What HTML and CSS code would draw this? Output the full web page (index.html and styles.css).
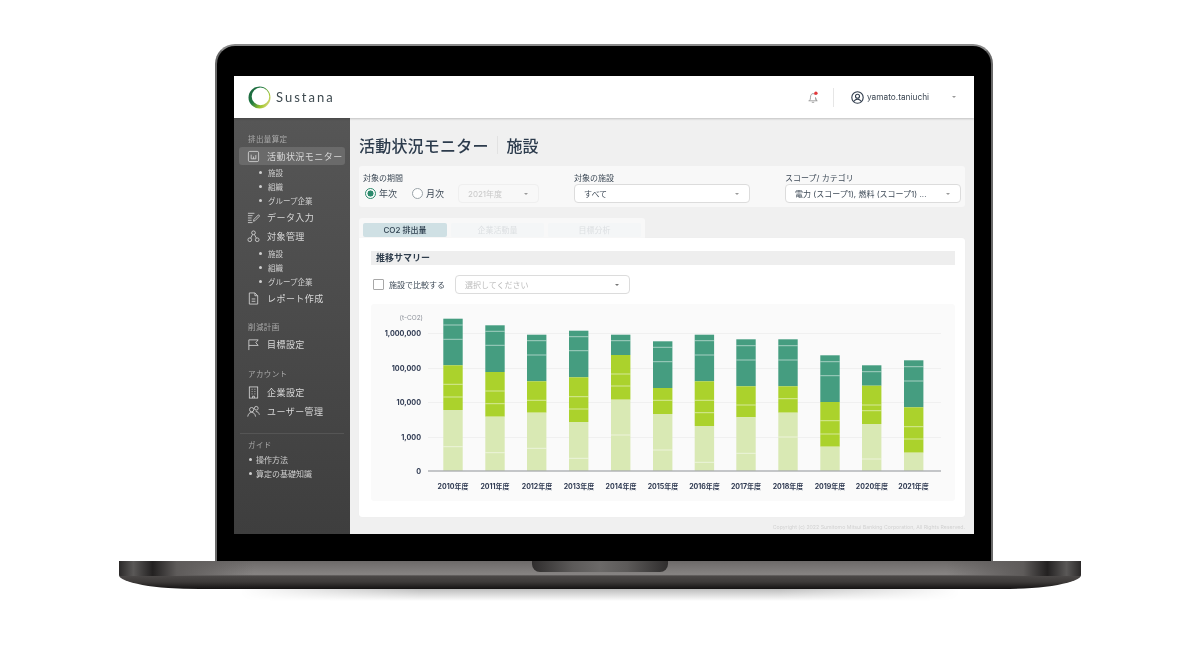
FILE: index.html
```html
<!DOCTYPE html>
<html lang="ja">
<head>
    <meta charset="UTF-8">
    <title>Sustana</title>
    <link rel="stylesheet" href="styles.css">
</head>
<body>
<div class="laptop">
    <div class="lid">
        <div class="screen">
            <header class="topbar">
                <div class="logo">
                    <svg width="23" height="23" viewBox="0 0 23 23">
                        <defs>
                            <linearGradient id="ring" x1="0" y1="0" x2="1" y2="0.7">
                                <stop offset="0" stop-color="#1c5f3e"/>
                                <stop offset="0.45" stop-color="#1f7a42"/>
                                <stop offset="0.8" stop-color="#9fc62c"/>
                                <stop offset="1" stop-color="#d7d67a"/>
                            </linearGradient>
                        </defs>
                        <path fill="url(#ring)" fill-rule="evenodd" d="M11.5 0.5a11 11 0 1 0 0 22a11 11 0 1 0 0-22zM12.5 1.6a8.8 8.8 0 1 1 0 17.6a8.8 8.8 0 1 1 0-17.6z"/>
                    </svg>
                    <span class="logo-name">Sustana</span>
                </div>
                <div class="topbar-right">
                    <span class="bell">
                        <svg width="12" height="13" viewBox="0 0 12 13" fill="none" stroke="#9a9a9a" stroke-width="0.9">
                            <path d="M2.5 9.8c.8-1 1-2 1-3.6C3.500 4 4.600 2.600 6 2.600c.7 0 1.300.3 1.800.8M8.500 6.500c0 1.500.3 2.400 1 3.300zM1.500 9.800h9M4.800 11.300h2.400"/>
                            <circle cx="8.900" cy="2.300" r="1.700" fill="#e3393c" stroke="none"/>
                        </svg>
                    </span>
                    <span class="user">
                        <svg width="13" height="13" viewBox="0 0 13 13" fill="none" stroke="#2e3a4a" stroke-width="1.100">
                            <circle cx="6.500" cy="6.500" r="5.700"/>
                            <circle cx="6.500" cy="5.200" r="2"/>
                            <path d="M3 10.300c.8-1.400 2-2 3.500-2s2.700.6 3.500 2"/>
                        </svg>
                        yamato.taniuchi
                    </span>
                    <span class="caret caret-user"></span>
                </div>
            </header>
            <div class="body">
                <nav class="sidebar">
                    <div class="side-label first">排出量算定</div>
                    <a class="side-item active">
                        <svg class="ico" viewBox="0 0 14 14"><rect x="1.500" y="1.500" width="11" height="11" rx="1.500"/><path d="M4.500 5v4.500h5M7 7v2.500M9.500 5.500v4"/></svg>
                        活動状況モニター
                    </a>
                    <ul class="side-sub">
                        <li>施設</li>
                        <li>組織</li>
                        <li>グループ企業</li>
                    </ul>
                    <a class="side-item">
                        <svg class="ico" viewBox="0 0 14 14"><path d="M1 2.500h7M1 5h5M1 7.500h4M1 10h4M1 12.500h5M7 11l.5-2 5-5 1 1.500-5 5z"/></svg>
                        データ入力
                    </a>
                    <a class="side-item">
                        <svg class="ico" viewBox="0 0 14 14"><circle cx="7" cy="3" r="2"/><circle cx="3" cy="10.500" r="2"/><circle cx="11" cy="10.500" r="2"/><path d="M6 4.800l-2 3.900M8 4.800l2 3.900"/></svg>
                        対象管理
                    </a>
                    <ul class="side-sub">
                        <li>施設</li>
                        <li>組織</li>
                        <li>グループ企業</li>
                    </ul>
                    <a class="side-item">
                        <svg class="ico" viewBox="0 0 14 14"><path d="M2.500 1h6l3 3v9h-9zM8.500 1v3h3M5 7.500h4M5 10h4"/></svg>
                        レポート作成
                    </a>
                    <div class="side-label gap">削減計画</div>
                    <a class="side-item">
                        <svg class="ico" viewBox="0 0 14 14"><path d="M2 13V2h10l-2.500 3L12 8H2"/></svg>
                        目標設定
                    </a>
                    <div class="side-label gap account">アカウント</div>
                    <a class="side-item">
                        <svg class="ico" viewBox="0 0 14 14"><rect x="2.500" y="1" width="9" height="12"/><path d="M5 3.500h1M8 3.500h1M5 6h1M8 6h1M5 8.500h1M8 8.500h1M6 13v-2h2v2"/></svg>
                        企業設定
                    </a>
                    <a class="side-item">
                        <svg class="ico" viewBox="0 0 14 14"><circle cx="5" cy="5" r="2.300"/><circle cx="10" cy="3.500" r="2"/><path d="M.8 12.500c.4-3 2-4.500 4.200-4.500s3.800 1.500 4.200 4.500M9.500 7c2 0 3.300 1.200 3.800 3.500"/></svg>
                        ユーザー管理
                    </a>
                    <div class="side-divider"></div>
                    <div class="side-label guide">ガイド</div>
                    <ul class="side-sub guide-list">
                        <li>操作方法</li>
                        <li>算定の基礎知識</li>
                    </ul>
                </nav>
                <main class="main">
                    <h1 class="title"><span class="title-main">活動状況モニター</span><span>施設</span></h1>
                    <section class="filters">
                        <div class="filter">
                            <label class="filter-label">対象の期間</label>
                            <div class="period">
                                <span class="radio on"></span><span class="radio-text">年次</span>
                                <span class="radio"></span><span class="radio-text second">月次</span>
                                <span class="select disabled year">2021年度<i class="caret"></i></span>
                            </div>
                        </div>
                        <div class="filter">
                            <label class="filter-label">対象の施設</label>
                            <span class="select">すべて<i class="caret"></i></span>
                        </div>
                        <div class="filter">
                            <label class="filter-label">スコープ/ カテゴリ</label>
                            <span class="select">電力 (スコープ1), 燃料 (スコープ1) ...<i class="caret"></i></span>
                        </div>
                    </section>
                    <div class="tabs">
                        <span class="tab current">CO2 排出量</span>
                        <span class="tab">企業活動量</span>
                        <span class="tab">目標分析</span>
                    </div>
                    <section class="card">
                        <h2 class="section-head">推移サマリー</h2>
                        <div class="compare">
                            <span class="checkbox"></span>
                            <span class="compare-label">施設で比較する</span>
                            <span class="select compare-select">選択してください<i class="caret"></i></span>
                        </div>
                        <div class="chart">
                            <svg width="584" height="197" viewBox="371 304 584 197">
                                <g class="grid">
                                    <line x1="428" x2="941" y1="333.500" y2="333.500"/>
                                    <line x1="428" x2="941" y1="368.500" y2="368.500"/>
                                    <line x1="428" x2="941" y1="402.500" y2="402.500"/>
                                    <line x1="428" x2="941" y1="437.500" y2="437.500"/>
                                </g>
                                <g class="y-labels">
                                    <text class="unit" x="423" y="320">(t-CO2)</text>
                                    <text x="421" y="336">1,000,000</text>
                                    <text x="421" y="371">100,000</text>
                                    <text x="421" y="405">10,000</text>
                                    <text x="421" y="440">1,000</text>
                                    <text x="421" y="474">0</text>
                                </g>
                                <g class="bar-dark">
                                    <rect x="443.300" y="318.700" width="19.400" height="46.600"/>
                                    <rect x="485.300" y="325.300" width="19.400" height="46.700"/>
                                    <rect x="527" y="334.700" width="19.400" height="46.600"/>
                                    <rect x="569" y="330.700" width="19.400" height="46.600"/>
                                    <rect x="611" y="334.700" width="19.400" height="20.300"/>
                                    <rect x="653" y="341.300" width="19.400" height="46.700"/>
                                    <rect x="694.700" y="334.700" width="19.400" height="46.600"/>
                                    <rect x="736.300" y="339.300" width="19.400" height="47"/>
                                    <rect x="778.300" y="339.300" width="19.400" height="47"/>
                                    <rect x="820.300" y="355.300" width="19.400" height="46.700"/>
                                    <rect x="862" y="365.300" width="19.400" height="20.400"/>
                                    <rect x="904" y="360.300" width="19.400" height="47"/>
                                </g>
                                <g class="bar-mid">
                                    <rect x="443.300" y="365.300" width="19.400" height="44.700"/>
                                    <rect x="485.300" y="372" width="19.400" height="44.700"/>
                                    <rect x="527" y="381.300" width="19.400" height="31.400"/>
                                    <rect x="569" y="377.300" width="19.400" height="44.700"/>
                                    <rect x="611" y="355" width="19.400" height="44.700"/>
                                    <rect x="653" y="388" width="19.400" height="26"/>
                                    <rect x="694.700" y="381.300" width="19.400" height="44.700"/>
                                    <rect x="736.300" y="386.300" width="19.400" height="31"/>
                                    <rect x="778.300" y="386.300" width="19.400" height="26.400"/>
                                    <rect x="820.300" y="402" width="19.400" height="44.700"/>
                                    <rect x="862" y="385.700" width="19.400" height="38.300"/>
                                    <rect x="904" y="407.300" width="19.400" height="45.400"/>
                                </g>
                                <g class="bar-light">
                                    <rect x="443.300" y="410" width="19.400" height="60.700"/>
                                    <rect x="485.300" y="416.700" width="19.400" height="54"/>
                                    <rect x="527" y="412.700" width="19.400" height="58"/>
                                    <rect x="569" y="422" width="19.400" height="48.700"/>
                                    <rect x="611" y="399.700" width="19.400" height="71"/>
                                    <rect x="653" y="414" width="19.400" height="56.700"/>
                                    <rect x="694.700" y="426" width="19.400" height="44.700"/>
                                    <rect x="736.300" y="417.300" width="19.400" height="53.400"/>
                                    <rect x="778.300" y="412.700" width="19.400" height="58"/>
                                    <rect x="820.300" y="446.700" width="19.400" height="24"/>
                                    <rect x="862" y="424" width="19.400" height="46.700"/>
                                    <rect x="904" y="452.700" width="19.400" height="18"/>
                                </g>
                                <path class="seams" d="M443.300 325h19.400M443.300 339.300h19.400M443.300 384.300h19.400M443.300 397h19.400M443.300 446.700h19.400
                                    M485.300 331.300h19.400M485.300 345.300h19.400M485.300 391h19.400M485.300 403.700h19.400M485.300 452.700h19.400
                                    M527 340.700h19.400M527 355h19.400M527 400.300h19.400M527 448.300h19.400
                                    M569 336.700h19.400M569 350.700h19.400M569 396.700h19.400M569 409h19.400M569 458.300h19.400
                                    M611 340.700h19.400M611 374h19.400M611 386h19.400M611 435h19.400
                                    M653 347.300h19.400M653 361.700h19.400M653 400.300h19.400M653 450h19.400
                                    M694.700 340.700h19.400M694.700 355h19.400M694.700 400.300h19.400M694.700 412.700h19.400M694.700 462.300h19.400
                                    M736.300 345.700h19.400M736.300 360h19.400M736.300 405h19.400M736.300 453.300h19.400
                                    M778.300 345.700h19.400M778.300 360h19.400M778.300 398.700h19.400M778.300 437h19.400
                                    M820.300 361.700h19.400M820.300 375.700h19.400M820.300 420.700h19.400M820.300 434h19.400
                                    M862 371.700h19.400M862 405h19.400M862 410.700h19.400M862 459h19.400
                                    M904 366.700h19.400M904 381h19.400M904 426.700h19.400M904 439h19.400"/>
                                <line class="axis" x1="428" x2="941" y1="471" y2="471"/>
                                <g class="x-labels">
                                    <text x="453" y="489">2010年度</text>
                                    <text x="495" y="489">2011年度</text>
                                    <text x="537" y="489">2012年度</text>
                                    <text x="579" y="489">2013年度</text>
                                    <text x="621" y="489">2014年度</text>
                                    <text x="663" y="489">2015年度</text>
                                    <text x="704.500" y="489">2016年度</text>
                                    <text x="746" y="489">2017年度</text>
                                    <text x="788" y="489">2018年度</text>
                                    <text x="830" y="489">2019年度</text>
                                    <text x="872" y="489">2020年度</text>
                                    <text x="913.500" y="489">2021年度</text>
                                </g>
                            </svg>
                        </div>
                    </section>
                    <footer class="copyright">Copyright (c) 2022 Sumitomo Mitsui Banking Corporation, All Rights Reserved.</footer>
                </main>
            </div>
        </div>
    </div>
    <div class="base"><div class="notch"></div></div>
    <div class="base-shadow"></div>
</div>
</body>
</html>
```

FILE: styles.css
```css
*{margin: 0;padding: 0;box-sizing: border-box}
body{
    background-color: #fff;
    height: 654px;
    overflow: hidden;
    font-family: "Inter", "Noto Sans CJK JP", sans-serif;
    color: #333f4d;
}
ul{list-style: none}

/* laptop frame */
.laptop{
    display: flex;
    flex-direction: column;
    align-items: center;
    padding-top: 44px;
}
.lid{
    width: 778px;
    height: 517px;
    margin-left: 8px;
    padding: 30px 17px 0;
    background-color: #000;
    border: 2px solid #6a6a6a;
    border-top-color: #8a8a8a;
    border-bottom: 0;
    border-radius: 20px 20px 0 0;
}
.base{
    display: flex;
    justify-content: center;
    width: 962px;
    height: 28px;
    background:
        linear-gradient(90deg, #2b2929 0, #5a5857 1.5%, #232121 3.5%, #5e5b5a 6%, transparent 14%, transparent 86%, #5e5b5a 94%, #232121 96.5%, #5a5857 98.5%, #2b2929 100%) 0 0 / 100% 15px no-repeat,
        linear-gradient(180deg, #6d6a69 0, #878483 48%, #4b4847 54%, #3d3a39 75%, #141212 100%);
    border-radius: 0 0 80px 80px / 0 0 14px 14px;
}
.notch{
    width: 136px;
    height: 11px;
    background: linear-gradient(90deg, #2f2d2d, #5c5a59 30%, #6b6968 50%, #5c5a59 70%, #2f2d2d);
    border-radius: 0 0 8px 8px;
}
.base-shadow{
    width: 720px;
    height: 12px;
    background: linear-gradient(180deg, #bdbdbd, #fff);
    -webkit-mask-image: linear-gradient(90deg, transparent, #000 25%, #000 75%, transparent);
}

/* screen */
.screen{
    display: flex;
    flex-direction: column;
    width: 740px;
    height: 458px;
    background-color: #f0f0f0;
    filter: blur(0.5px);
}
.topbar{
    display: flex;
    align-items: center;
    justify-content: space-between;
    flex: 0 0 42px;
    padding: 0 18px 0 14px;
    background-color: #fff;
    box-shadow: 0 1px 2px rgba(0,0,0,0.2);
    position: relative;
}
.logo{
    display: flex;
    align-items: center;
    gap: 5px;
}
.logo-name{
    font-family: "Lato", sans-serif;
    font-size: 13px;
    letter-spacing: 2px;
    color: #3e4a50;
}
.topbar-right{
    display: flex;
    align-items: center;
}
.bell{
    display: flex;
    padding-right: 14px;
    margin-right: 17px;
    border-right: 1px solid #e6e6e6;
    height: 19px;
    align-items: center;
}
.user{
    display: flex;
    align-items: center;
    gap: 3px;
    font-size: 8.3px;
    color: #3c4753;
    width: 101px;
}
.caret{
    display: inline-block;
    width: 0;
    height: 0;
    border-left: 2.5px solid transparent;
    border-right: 2.5px solid transparent;
    border-top: 2.5px solid #9a9a9a;
}

.body{
    display: flex;
    flex: 1;
    min-height: 0;
}

/* sidebar */
.sidebar{
    flex: 0 0 116px;
    padding-top: 14px;
    background: linear-gradient(180deg, #565656, #3e3e3e);
    color: #d8d8d8;
    font-family: "Noto Sans CJK JP", sans-serif;
}
.side-label{
    height: 15px;
    padding-left: 14px;
    font-size: 7.5px;
    line-height: 14px;
    letter-spacing: 0.4px;
    color: #a9a9a9;
}
.side-label.gap{margin-top: 12px}
.side-label.account{margin-top: 13px;height: 16px}
.side-label.guide{margin-top: 4px}
.side-item{
    display: flex;
    align-items: center;
    gap: 7px;
    height: 19px;
    margin: 0 5px;
    padding-left: 8px;
    font-size: 9px;
    letter-spacing: 0.45px;
    border-radius: 3px;
}
.side-item.active{
    height: 18px;
    background-color: #6a6a6a;
}
.ico{
    width: 13px;
    height: 13px;
    flex: none;
    fill: none;
    stroke: #d5d5d5;
    stroke-width: 0.9;
}
.side-sub{
    margin: 1px 0 1px;
    font-size: 7.5px;
    color: #cfcfcf;
}
.side-sub li{
    display: flex;
    align-items: center;
    gap: 6px;
    height: 13.7px;
    padding-left: 25px;
}
.side-sub li::before{
    content: "";
    width: 3px;
    height: 3px;
    border-radius: 50%;
    background-color: #cfcfcf;
}
.guide-list{margin-top: -1px}
.guide-list li{
    height: 14px;
    padding-left: 15px;
    gap: 4px;
    font-size: 8px;
}
.side-divider{
    height: 1px;
    margin: 12px 6px 0;
    background-color: #555;
}

/* main */
.main{
    flex: 1;
    min-width: 0;
    padding: 14px 9px 0;
    font-family: "Inter", "Noto Sans CJK JP", sans-serif;
}
.title{
    display: flex;
    align-items: center;
    height: 26px;
    font-family: "Noto Sans CJK JP", sans-serif;
    font-size: 16px;
    font-weight: 500;
    color: #2c3b4c;
}
.title-main{
    padding-right: 8px;
    margin-right: 9px;
    border-right: 1px solid #e2e2e2;
    line-height: 18px;
    letter-spacing: 0.2px;
}
.filters{
    display: grid;
    grid-template-columns: repeat(3, 176px);
    column-gap: 35px;
    height: 41px;
    margin-top: 8px;
    padding: 6px 4px 0;
    background-color: #f8f8f8;
    border-radius: 3px;
}
.filter-label{
    display: block;
    height: 12px;
    font-size: 8px;
    line-height: 12px;
    color: #3e4a57;
}
.period{
    display: flex;
    align-items: center;
}
.radio{
    width: 11px;
    height: 11px;
    margin-left: 2px;
    border: 1px solid #9aa3a8;
    border-radius: 50%;
    background-color: #fff;
}
.radio.on{
    border-color: #2c8a6c;
    background: radial-gradient(circle, #2c8a6c 0 2.8px, #fff 3.3px);
}
.radio-text{
    width: 36px;
    padding-left: 3px;
    font-size: 9px;
    color: #3e4a57;
}
.radio-text + .radio{margin-left: 0}
.radio-text.second{width: 33px}
.select{
    display: flex;
    align-items: center;
    justify-content: space-between;
    height: 19px;
    padding: 0 10px 0 9px;
    background-color: #fff;
    border: 1px solid #dcdcdc;
    border-radius: 4px;
    font-size: 8px;
    color: #3e4a57;
    white-space: nowrap;
}
.select.disabled{
    background-color: #f8f8f8;
    border-color: #efefef;
    color: #c8c8c8;
}
.year{
    width: 81px;
    margin-left: 2px;
}

/* tabs */
.tabs{
    display: flex;
    gap: 4px;
    width: 286px;
    height: 20px;
    margin-top: 11px;
    padding: 5px 4px 1px;
    background-color: #f8f8f8;
    border-radius: 3px 3px 0 0;
}
.tab{
    width: 93px;
    text-align: center;
    font-size: 8px;
    line-height: 14px;
    color: #dcdfe2;
    background-color: #f4f6f7;
    border-radius: 2px;
}
.tab.current{
    width: 84px;
    font-weight: 500;
    color: #2f4150;
    background-color: #cfe0e4;
}

/* card */
.card{
    height: 279px;
    padding: 13px 10px 0 12px;
    background-color: #fff;
    border-radius: 0 3px 3px 3px;
    box-shadow: 0 0 1px rgba(0,0,0,0.06);
}
.section-head{
    height: 14px;
    padding-left: 5px;
    font-size: 9px;
    font-weight: 700;
    line-height: 14px;
    color: #2f3d4c;
    background-color: #eeeeee;
}
.compare{
    display: flex;
    align-items: center;
    height: 19px;
    margin-top: 10px;
}
.checkbox{
    width: 11px;
    height: 11px;
    margin-left: 2px;
    border: 1px solid #a8a8a8;
    border-radius: 1px;
}
.compare-label{
    width: 71px;
    padding-left: 5px;
    font-size: 8px;
    color: #3e4a57;
}
.compare-select{
    width: 175px;
    color: #bcbcbc;
}
.compare-select .caret{border-top-color: #777}
.chart{
    height: 197px;
    margin-top: 10px;
    background-color: #fafafa;
    border-radius: 3px;
}
.chart svg{display: block}
.grid line{stroke: #f0f0f0;stroke-width: 1}
.axis{stroke: #8d9196;stroke-width: 1}
.bar-dark rect{fill: #459d80}
.bar-mid rect{fill: #abd22c}
.bar-light rect{fill: #d9e9b4}
.seams{fill: none;stroke: #fff;stroke-width: 0.8;stroke-opacity: 0.65}
.y-labels text{
    text-anchor: end;
    font-size: 7.2px;
    font-weight: 700;
    fill: #2f3a52;
}
.y-labels .unit{font-weight: 400;font-size: 6.5px;fill: #8a8f98}
.x-labels text{
    text-anchor: middle;
    font-size: 7px;
    font-weight: 700;
    fill: #2f3a52;
}
.copyright{
    padding: 6px 0 0;
    text-align: right;
    font-size: 5.2px;
    line-height: 8px;
    color: #d2d2d2;
}
```
